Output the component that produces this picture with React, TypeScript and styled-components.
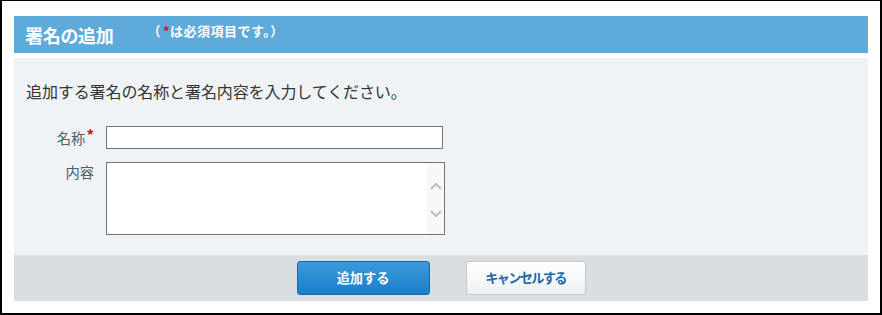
import React from "react";
import styled, { createGlobalStyle } from "styled-components";

const Global = createGlobalStyle`
  html, body { margin: 0; padding: 0; background: #fff; }
  body { font-family: "Noto Sans CJK JP", "Noto Sans", sans-serif; }
  * { box-sizing: border-box; }
`;

const Frame = styled.div`
  width: 882px;
  height: 315px;
  border-style: solid;
  border-color: #000;
  border-width: 1px 2px 2px 2px;
  padding: 15px 12px 12px 12px;
  display: flex;
  flex-direction: column;
  background: #fff;
`;

const Header = styled.div`
  height: 37px;
  background: #5eaadb;
  display: flex;
  align-items: center;
  padding-left: 11px;
  color: #fff;
  flex-shrink: 0;
`;

const Title = styled.h1`
  margin: 0;
  font-size: 18px;
  font-weight: 700;
  line-height: 20px;
  letter-spacing: -0.3px;
  margin-top: 1px;
`;

const Note = styled.span`
  font-size: 13px;
  font-weight: 700;
  line-height: 14px;
  margin-left: 34px;
  margin-top: -7px;
  letter-spacing: 0.5px;
`;

const Req = styled.span`
  color: #e60012;
  margin-left: 2px;
`;

const Body = styled.div`
  margin-top: 5px;
  height: 197px;
  background: #eff3f6;
  padding: 22px 0 0 12px;
  flex-shrink: 0;
`;

const Lead = styled.p`
  margin: 0 0 24px 0;
  font-size: 16px;
  line-height: 22px;
  color: #333;
  letter-spacing: -0.1px;
`;

const Form = styled.div`
  display: grid;
  grid-template-columns: 68px auto;
  column-gap: 12px;
  row-gap: 13px;
  justify-content: start;
`;

const Label = styled.label<{ $top: number }>`
  text-align: right;
  font-size: 14.3px;
  line-height: 18px;
  color: #4c5d6e;
  padding-top: ${(p) => p.$top}px;
  white-space: nowrap;
`;

const LabelReq = styled.span`
  color: #e60012;
  font-size: 15px;
  font-weight: 700;
  position: relative;
  top: -3px;
  margin-left: 1px;
`;

const TextInput = styled.input`
  width: 337px;
  height: 23px;
  border: 1px solid #737373;
  background: #fff;
  margin: 0;
  padding: 0 4px;
  font-size: 14px;
`;

const AreaBox = styled.div`
  width: 339px;
  height: 73px;
  border: 1px solid #737373;
  background: #fff;
  display: flex;
`;

const AreaField = styled.textarea`
  flex: 1;
  border: none;
  outline: none;
  resize: none;
  margin: 0;
  padding: 2px 4px;
  background: transparent;
  font-size: 14px;
  overflow: hidden;
`;

const Scroll = styled.div`
  width: 17px;
  background: #f8f8f8;
  display: flex;
  flex-direction: column;
  align-items: center;
  padding-top: 19px;
  gap: 20px;
`;

const Footer = styled.div`
  height: 46px;
  background: #dadee1;
  display: flex;
  justify-content: center;
  align-items: flex-start;
  padding-top: 6px;
  gap: 36px;
  flex-shrink: 0;
`;

const Button = styled.button<{ $primary?: boolean }>`
  height: 34px;
  width: ${(p) => (p.$primary ? 133 : 120)}px;
  border-radius: 3px;
  font-family: "Noto Sans CJK JP", "Noto Sans", sans-serif;
  font-weight: 700;
  font-size: 13.2px;
  line-height: 16px;
  padding: 0;
  cursor: pointer;
  border: 1px solid ${(p) => (p.$primary ? "#1b68a3" : "#c3c9ce")};
  color: ${(p) => (p.$primary ? "#fff" : "#1c69aa")};
  background: ${(p) =>
    p.$primary
      ? "linear-gradient(#3b9ad9, #1a7ecb)"
      : "linear-gradient(#ffffff, #eef0f1)"};
  letter-spacing: ${(p) => (p.$primary ? "0" : "-1.7px")};
`;

const Chevron = ({ up }: { up?: boolean }) => (
  <svg width="12" height="8" viewBox="0 0 12 8">
    <path
      d={up ? "M1 7 L6 2 L11 7" : "M1 1 L6 6 L11 1"}
      fill="none"
      stroke="#c2c2c2"
      strokeWidth="2"
    />
  </svg>
);

export default function App() {
  return (
    <>
      <Global />
      <Frame>
        <Header>
          <Title>署名の追加</Title>
          <Note>
            （<Req>*</Req>は必須項目です。）
          </Note>
        </Header>
        <Body>
          <Lead>追加する署名の名称と署名内容を入力してください。</Lead>
          <Form>
            <Label $top={3}>
              名称<LabelReq>*</LabelReq>
            </Label>
            <TextInput type="text" />
            <Label $top={1}>内容</Label>
            <AreaBox>
              <AreaField />
              <Scroll>
                <Chevron up />
                <Chevron />
              </Scroll>
            </AreaBox>
          </Form>
        </Body>
        <Footer>
          <Button $primary>追加する</Button>
          <Button>キャンセルする</Button>
        </Footer>
      </Frame>
    </>
  );
}
